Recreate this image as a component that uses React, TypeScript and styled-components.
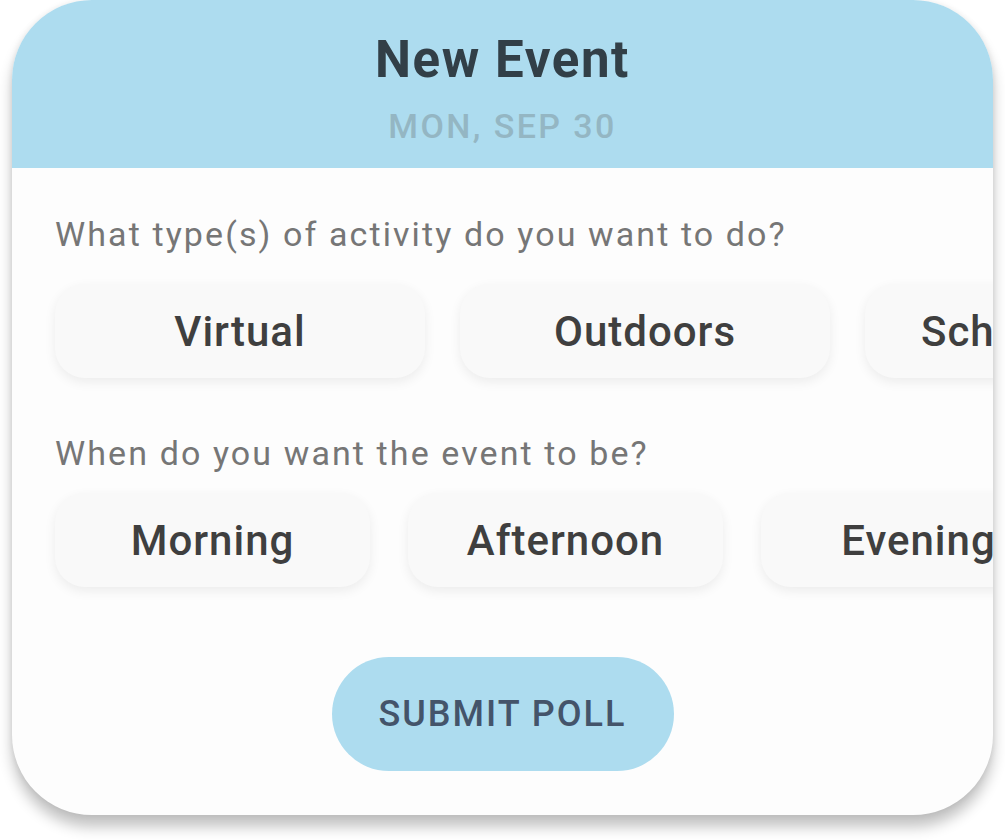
import React from 'react';
import styled, { createGlobalStyle } from 'styled-components';

const GlobalStyle = createGlobalStyle`
  body {
    margin: 0;
    background: #ffffff;
    font-family: Roboto, "Liberation Sans", sans-serif;
  }
`

const Page = styled.div`
  padding: 0 12px 25px;
`

const Card = styled.div`
  width: 981px;
  height: 815px;
  border-radius: 80px;
  overflow: hidden;
  background: #fdfdfd;
  display: flex;
  flex-direction: column;
  box-shadow: 0 12px 14px rgba(0, 0, 0, 0.24), 0 0 6px rgba(0, 0, 0, 0.08);
`

const Header = styled.header`
  height: 168px;
  box-sizing: border-box;
  padding-top: 30px;
  background: #addcef;
  display: flex;
  flex-direction: column;
  align-items: center;
`

const Title = styled.h1`
  margin: 0;
  font-size: 51px;
  line-height: 60px;
  font-weight: 700;
  letter-spacing: 1.6px;
  color: #323f47;
`

const DateLine = styled.div`
  margin-top: 16px;
  font-size: 34px;
  line-height: 40px;
  font-weight: 500;
  letter-spacing: 2.4px;
  color: #94b6c3;
`

const Body = styled.div`
  padding: 46px 0 0 43px;
  display: flex;
  flex-direction: column;
`

const Question = styled.p<{ gap: number }>`
  margin: 0 0 ${props => props.gap}px;
  font-size: 34px;
  line-height: 40px;
  letter-spacing: 2.1px;
  color: #767676;
`

const ChipRow = styled.div<{ gap: number }>`
  display: flex;
  gap: ${props => props.gap}px;
  margin-bottom: 55px;
`

const Chip = styled.button<{ width: number }>`
  flex: 0 0 auto;
  min-width: ${props => props.width}px;
  height: 94px;
  padding: 0 56px;
  border: none;
  border-radius: 30px;
  background: #f9f9f9;
  box-shadow: 0 4px 12px rgba(0, 0, 0, 0.07);
  font-family: Roboto, "Liberation Sans", sans-serif;
  font-size: 42px;
  font-weight: 500;
  letter-spacing: 1px;
  color: #3f3f3f;
  white-space: nowrap;
`

const Footer = styled.div`
  display: flex;
  justify-content: center;
  margin-top: 15px;
  margin-left: -43px;
`

const SubmitButton = styled.button`
  width: 342px;
  height: 114px;
  border: none;
  border-radius: 57px;
  background: #addcef;
  font-family: Roboto, "Liberation Sans", sans-serif;
  font-size: 36px;
  font-weight: 500;
  letter-spacing: 2px;
  color: #44546a;
`

const activities = ['Virtual', 'Outdoors', 'School Events']
const times = ['Morning', 'Afternoon', 'Evening']

export default function App() {
  return (
    <Page>
      <GlobalStyle />
      <Card>
        <Header>
          <Title>New Event</Title>
          <DateLine>MON, SEP 30</DateLine>
        </Header>
        <Body>
          <Question gap={30}>What type(s) of activity do you want to do?</Question>
          <ChipRow gap={35}>
            {activities.map(a => (
              <Chip key={a} width={370}>{a}</Chip>
            ))}
          </ChipRow>
          <Question gap={20}>When do you want the event to be?</Question>
          <ChipRow gap={38}>
            {times.map(t => (
              <Chip key={t} width={315}>{t}</Chip>
            ))}
          </ChipRow>
          <Footer>
            <SubmitButton>SUBMIT POLL</SubmitButton>
          </Footer>
        </Body>
      </Card>
    </Page>
  )
}
